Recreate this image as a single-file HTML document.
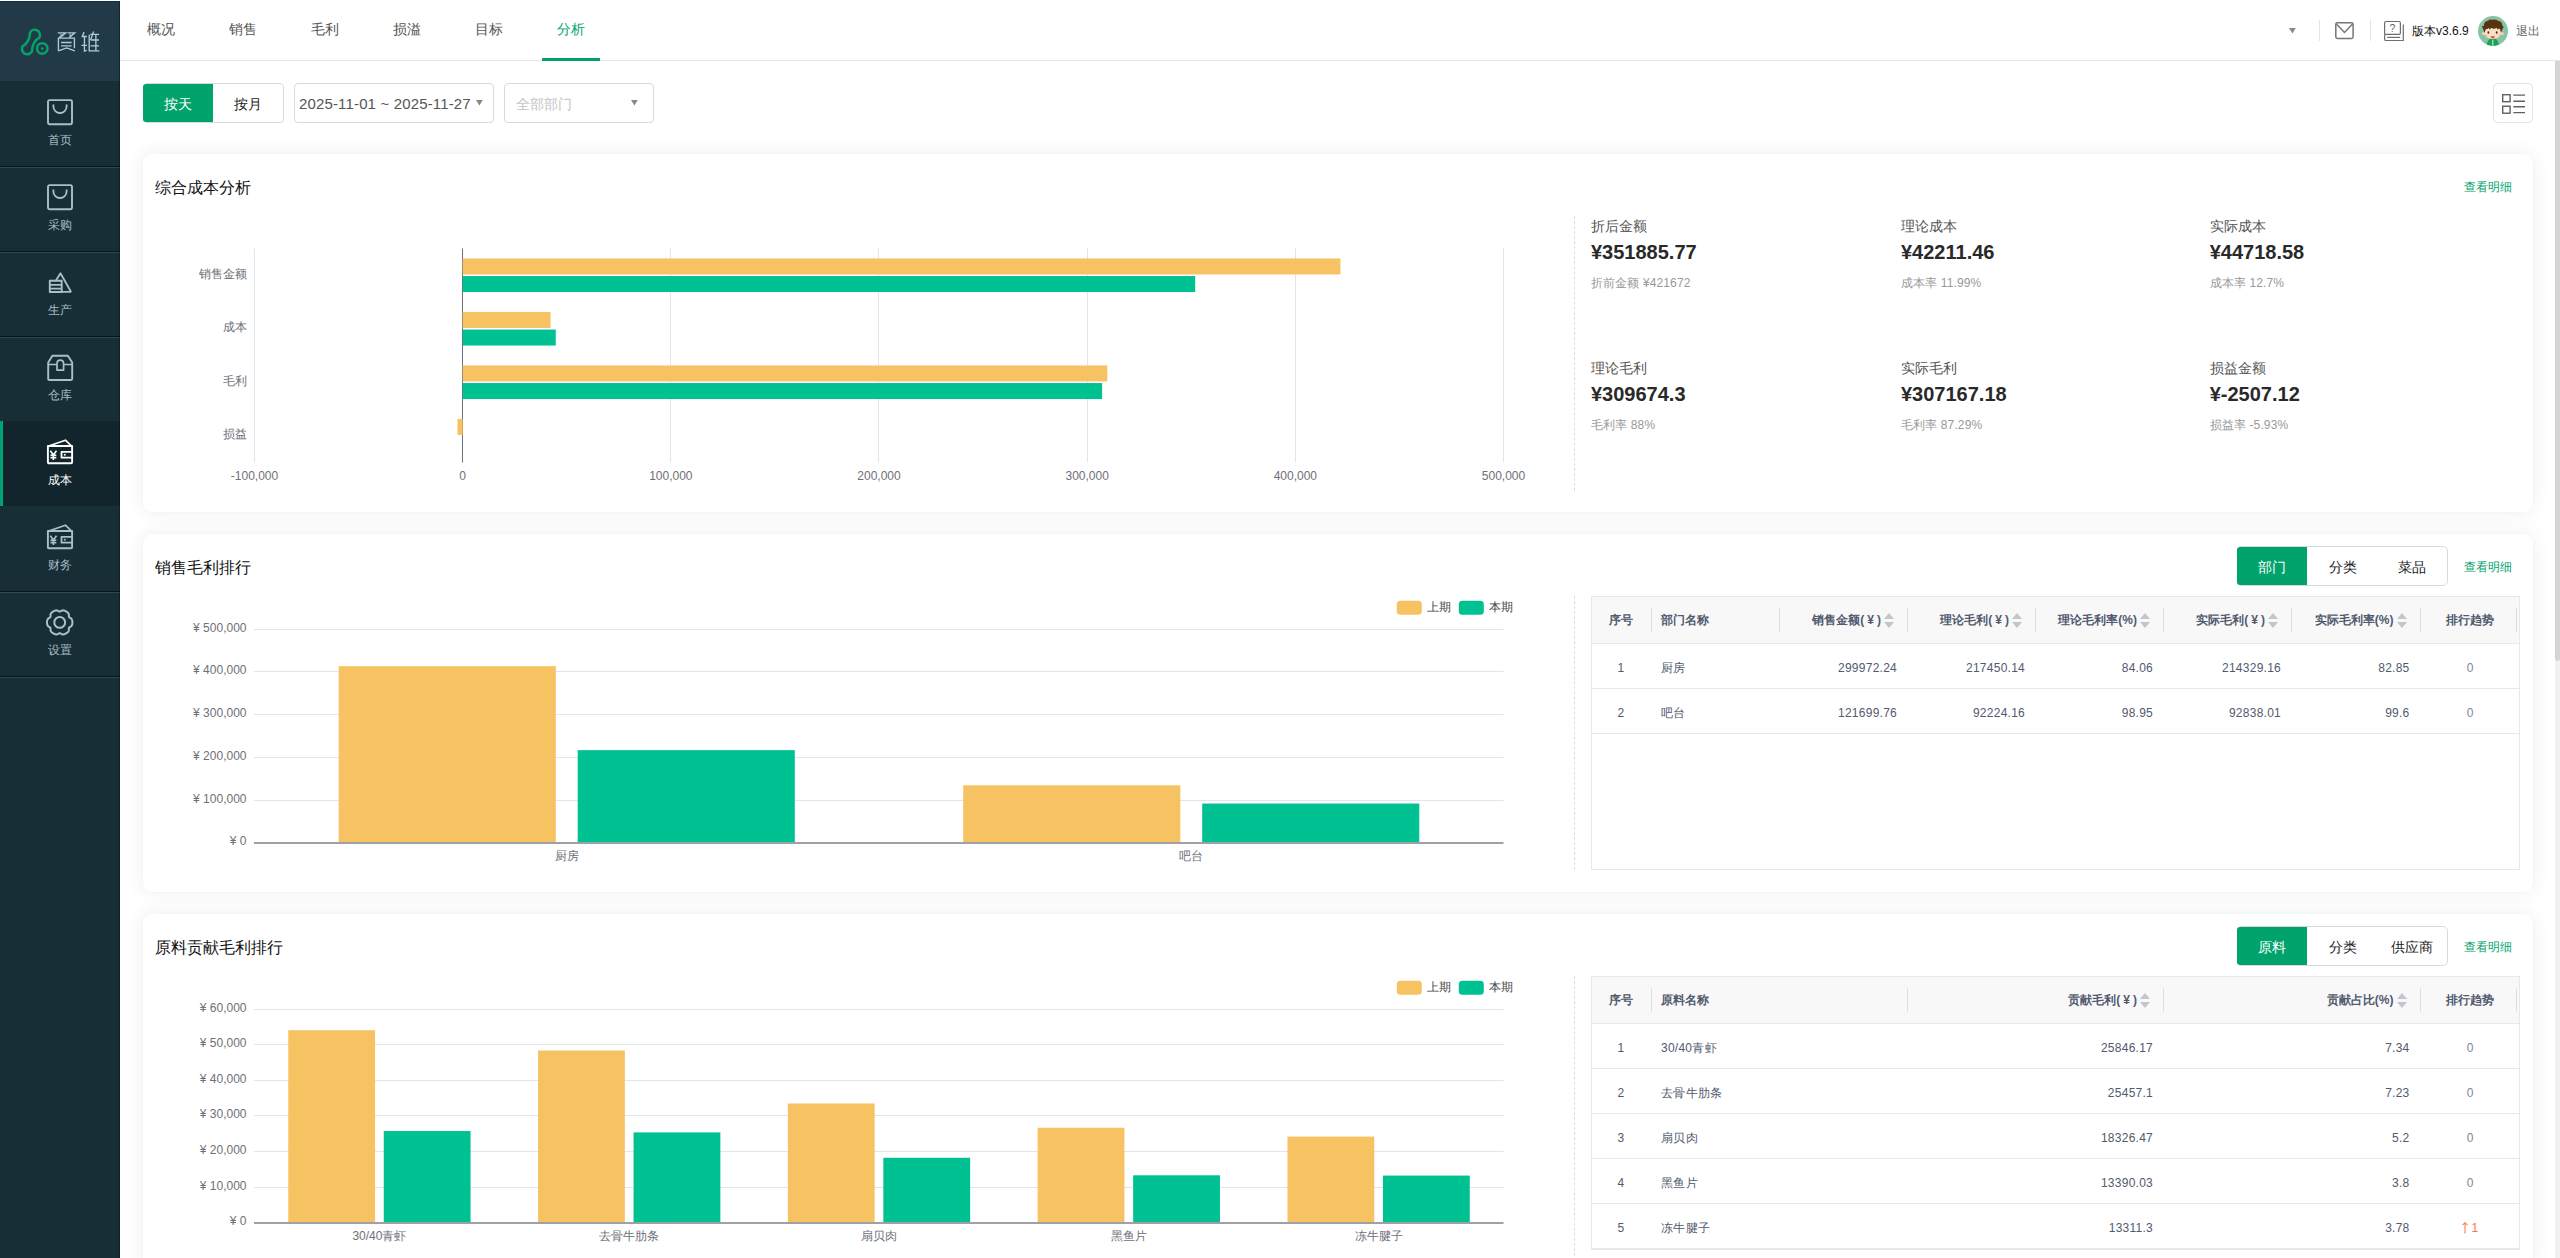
<!DOCTYPE html>
<html lang="zh"><head><meta charset="utf-8"><title>成本分析</title>
<style>

*{box-sizing:border-box;margin:0;padding:0}
html,body{width:2560px;height:1258px;overflow:hidden;background:#fff}
body{font-family:"Liberation Sans",sans-serif;font-size:12px;color:#333;position:relative}
.abs{position:absolute}
.t{position:absolute;white-space:nowrap;line-height:1}
svg{position:absolute;overflow:visible}
/* sidebar */
#side{position:absolute;left:0;top:1px;width:120px;height:1257px;background:#182e37}
#side:after{content:"";position:absolute;right:0;top:0;width:1px;height:100%;background:rgba(0,14,24,.42);z-index:5}
#logo{position:absolute;left:0;top:0;width:120px;height:80px;background:#223a47;border-top:1px solid #10303c}
.mi{position:absolute;left:0;width:120px;height:85px}
.sep{position:absolute;left:0;width:120px;height:2px;background:#2e4a56;border-top:1px solid #08131a}
.mi .lb{position:absolute;left:0;width:120px;text-align:center;top:52px;font-size:12px;line-height:14px;color:#a5bec6}
.mi.on{background:#12252d}
.mi.on .lb{color:#fff}
.mi.on:before{content:"";position:absolute;left:0;top:0;width:3px;height:85px;background:linear-gradient(90deg,#00a070 55%,#00b178)}
/* top */
#top{position:absolute;left:120px;top:0;width:2440px;height:61px;background:#fff;border-bottom:1px solid #e6e6e6}
.tab{position:absolute;top:0;height:60px;width:82px;text-align:center;font-size:14px;line-height:58px;color:#555}
.tab.on{color:#00a36b}
.tab.on:after{content:"";position:absolute;left:12px;right:12px;bottom:-1px;height:3px;background:#00a16a;z-index:2}
/* cards */
.card{position:absolute;left:142.5px;width:2390px;height:358px;background:#fff;border-radius:9px;box-shadow:0 0 20px rgba(0,0,0,.07),0 0 2px rgba(0,0,0,.035)}
.ct{position:absolute;left:12px;top:25px;font-size:16px;line-height:18px;color:#111;white-space:nowrap}
.lnk{position:absolute;font-size:12px;line-height:14px;color:#00a36b;white-space:nowrap}
.bg{position:absolute;height:40px;border:1px solid #d9d9d9;border-radius:4px;background:#fff}
.bg span.on{}
.bg span{position:absolute;top:0;height:38px;line-height:40px;text-align:center;font-size:14px;color:#222}
.bg span.on{background:#00a36b;color:#fff;left:-1px !important;border-radius:3px 0 0 3px}
.vd{position:absolute;width:0;border-left:1px dashed #dcdcdc}
/* stats */
.st{position:absolute}
.st .a{position:absolute;left:0;top:0;font-size:14px;line-height:16px;color:#555;white-space:nowrap}
.st .b{position:absolute;left:0;top:22px;font-size:20px;line-height:24px;font-weight:bold;color:#292929;white-space:nowrap}
.st .c{position:absolute;left:0;top:58px;font-size:12px;line-height:14px;color:#999;white-space:nowrap;letter-spacing:.12px}
/* tables */
.tb{position:absolute;border:1px solid #e6e8eb;background:#fff;overflow:hidden}
.tb .hd{position:absolute;left:0;top:0;right:0;height:47px;background:#f8f8f9;border-bottom:1px solid #e6e8eb}
.tb .row{position:absolute;left:0;right:0;height:45px;border-bottom:1px solid #e6e8eb}
.tb .c{position:absolute;top:0;height:100%;font-size:12px;white-space:nowrap;color:#515a6e}
.tb .hd .c{font-weight:bold;line-height:46.5px;color:#515a6e}
.tb .row .c{line-height:48.5px;letter-spacing:.25px}
.tb .hs{position:absolute;top:10.5px;width:1px;height:24px;background:#dcdee2}
.so{display:inline-block;position:relative;width:10px;height:15px;vertical-align:middle;margin-left:3px;top:-0.5px}
.so:before{content:"";position:absolute;left:0;top:0;border:5px solid transparent;border-top:0;border-bottom:6.5px solid #c3c6cc}
.so:after{content:"";position:absolute;left:0;bottom:0;border:5px solid transparent;border-bottom:0;border-top:6.5px solid #c3c6cc}
.yy{padding:0 3px 0 3px}

</style></head><body>
<div id="side"><div id="logo">
<svg style="left:20px;top:24.600px" width="32" height="32" viewBox="0 0 32 32" fill="none" stroke="#04a36b" stroke-width="2.5"><path d="M10.02 5.55A5.3 5.3 0 1 1 19.36 10.58Q12.27 14.51 11.97 24.29A5.3 5.3 0 1 1 2.64 19.27Q9.73 15.33 10.02 5.55Z"/><circle cx="22.25" cy="21.43" r="5.200"/><circle cx="22.25" cy="21.43" r="1.300" fill="#04a36b" stroke="none"/></svg><svg style="left:56px;top:27.800px" width="46" height="24" viewBox="0 0 46 24" fill="none" stroke="#aecbd6" stroke-width="1.35"><path d="M1.72 2.83L9.81 2.83L3.13 7.58M4.36 4.59L7.35 6.00M11.74 2.83L18.77 2.83L13.32 7.58M13.32 4.59L16.14 6.00M2.42 20.94L2.42 8.11L18.42 8.11L18.42 18.13M5.06 12.50L15.61 12.50M5.06 15.84L15.61 15.84M2.42 20.94L10.69 17.95L18.77 20.94M28.09 2.13L25.98 7.23M27.04 6.53L30.91 6.53M25.46 15.32L30.91 15.32M28.44 6.53L28.44 21.12L30.73 20.41M37.59 1.60L34.60 10.04M34.25 4.42L43.04 4.42M34.60 10.04L43.04 10.04M33.19 4.77L33.19 20.94L43.39 20.94M39.87 4.77L39.87 20.24M34.60 15.84L43.04 15.84"/></svg>
</div>
<div class="mi" style="top:80px"><svg style="left:47.2px;top:17.8px" width="27" height="28" viewBox="0 0 27 28" fill="none" stroke="#a8c0c9" stroke-width="1.9" stroke-linejoin="round"><rect x="1" y="1.1" width="24" height="24.1" rx="1.6"/><path d="M6.400 5.600v1.800a6.600 6.600 0 0 0 13.200 0v-1.800" stroke-width="1.8"/></svg><div class="lb">首页</div></div>
<div class="mi" style="top:165px"><svg style="left:47.2px;top:17.8px" width="27" height="28" viewBox="0 0 27 28" fill="none" stroke="#a8c0c9" stroke-width="1.9" stroke-linejoin="round"><rect x="1" y="1.1" width="24" height="24.1" rx="1.6"/><path d="M6.400 5.600v1.800a6.600 6.600 0 0 0 13.200 0v-1.800" stroke-width="1.8"/></svg><div class="lb">采购</div></div>
<div class="mi" style="top:250px"><svg style="left:47px;top:18px" width="27" height="28" viewBox="0 0 27 28" fill="none" stroke="#a8c0c9" stroke-width="1.9" stroke-linejoin="round"><path d="M2.800 11.700H14.700V22.950H2.800Z"/><path d="M3 15.800H14.500M3 19.600H14.500" stroke-width="1.7"/><path d="M8.900 11.500L13.500 4.300L23.700 22.200Q24 22.950 23 22.950H14.700" stroke-width="1.8"/></svg><div class="lb">生产</div></div>
<div class="mi" style="top:335px"><svg style="left:47px;top:18px" width="27" height="28" viewBox="0 0 27 28" fill="none" stroke="#a8c0c9" stroke-width="1.9" stroke-linejoin="round"><path d="M5.400 1.800H20.900L25.200 8.400V24.800Q25.200 26 24 26H2.400Q1.200 26 1.200 24.800V8.400Z"/><path d="M1.200 10.500H9.800M16.800 10.500H25.200" stroke-width="1.7"/><path d="M10 16.100V9.800Q10 6.200 13.300 6.200Q16.600 6.200 16.600 9.800V16.100Z" stroke-width="1.7"/></svg><div class="lb">仓库</div></div>
<div class="mi on" style="top:420px"><svg style="left:47px;top:18px" width="27" height="28" viewBox="0 0 27 28" fill="none" stroke="#ffffff" stroke-width="1.9" stroke-linejoin="round"><path d="M0.900 7H25.100V23.200Q25.100 24.300 24 24.300H2Q0.900 24.300 0.900 23.200Z"/><path d="M2.400 6.800L18.400 1.200L24.300 6.800" stroke-width="1.7"/><path d="M25.100 12.900H14.500V18.700H25.100" stroke-width="1.8"/><circle cx="17.800" cy="15.800" r="1" fill="#ffffff" stroke="none"/><path d="M3.300 11.800L6.400 16L9.500 11.800M6.400 16V21M3.500 16.400H9.300M3.500 18.700H9.300" stroke-width="1.6"/></svg><div class="lb">成本</div></div>
<div class="mi" style="top:505px"><svg style="left:47px;top:18px" width="27" height="28" viewBox="0 0 27 28" fill="none" stroke="#a8c0c9" stroke-width="1.9" stroke-linejoin="round"><path d="M0.900 7H25.100V23.200Q25.100 24.300 24 24.300H2Q0.900 24.300 0.900 23.200Z"/><path d="M2.400 6.800L18.400 1.200L24.300 6.800" stroke-width="1.7"/><path d="M25.100 12.900H14.500V18.700H25.100" stroke-width="1.8"/><circle cx="17.800" cy="15.800" r="1" fill="#a8c0c9" stroke="none"/><path d="M3.300 11.800L6.400 16L9.500 11.800M6.400 16V21M3.500 16.400H9.300M3.500 18.700H9.300" stroke-width="1.6"/></svg><div class="lb">财务</div></div>
<div class="mi" style="top:590px"><svg style="left:46.3px;top:17.6px" width="28" height="28" viewBox="0 0 28 28" fill="none" stroke="#a8c0c9" stroke-width="2.0" stroke-linejoin="round"><path d="M26.40 13.40L26.40 13.51L26.40 13.62L26.39 13.73L26.39 13.84L26.39 13.95L26.38 14.06L26.37 14.18L26.36 14.29L26.36 14.40L26.35 14.51L26.33 14.62L26.32 14.73L26.31 14.84L26.29 14.95L26.27 15.06L26.25 15.16L26.23 15.27L26.21 15.38L26.18 15.49L26.16 15.60L26.13 15.70L26.10 15.81L26.06 15.91L26.02 16.02L25.98 16.12L25.94 16.23L25.89 16.33L25.84 16.43L25.79 16.53L25.73 16.62L25.67 16.72L25.60 16.81L25.53 16.90L25.45 16.99L25.37 17.08L25.29 17.17L25.20 17.25L25.11 17.33L25.01 17.41L24.91 17.48L24.81 17.55L24.71 17.62L24.60 17.69L24.49 17.76L24.38 17.82L24.27 17.89L24.16 17.95L24.05 18.01L23.94 18.07L23.84 18.13L23.74 18.19L23.64 18.25L23.54 18.31L23.46 18.37L23.37 18.44L23.30 18.50L23.22 18.57L23.16 18.64L23.10 18.72L23.05 18.80L23.01 18.88L22.97 18.97L22.94 19.06L22.92 19.16L22.90 19.26L22.88 19.36L22.87 19.47L22.87 19.58L22.86 19.70L22.86 19.82L22.86 19.94L22.87 20.06L22.87 20.18L22.87 20.31L22.87 20.44L22.87 20.56L22.87 20.69L22.86 20.82L22.85 20.95L22.84 21.07L22.83 21.19L22.81 21.32L22.78 21.44L22.76 21.55L22.72 21.67L22.69 21.78L22.65 21.89L22.60 22.00L22.56 22.10L22.51 22.21L22.45 22.30L22.39 22.40L22.33 22.50L22.27 22.59L22.20 22.68L22.13 22.76L22.06 22.85L21.98 22.93L21.91 23.01L21.83 23.09L21.75 23.17L21.67 23.24L21.59 23.32L21.50 23.39L21.42 23.46L21.33 23.53L21.25 23.60L21.16 23.67L21.07 23.73L20.98 23.80L20.89 23.86L20.80 23.93L20.71 23.99L20.62 24.05L20.52 24.11L20.43 24.17L20.34 24.23L20.24 24.29L20.15 24.34L20.05 24.40L19.95 24.45L19.86 24.51L19.76 24.56L19.66 24.61L19.56 24.66L19.46 24.71L19.37 24.76L19.27 24.81L19.17 24.86L19.06 24.90L18.96 24.95L18.86 24.99L18.76 25.04L18.66 25.08L18.55 25.12L18.45 25.15L18.34 25.19L18.24 25.22L18.13 25.26L18.03 25.29L17.92 25.31L17.81 25.34L17.70 25.36L17.59 25.38L17.48 25.40L17.37 25.41L17.26 25.42L17.15 25.43L17.04 25.43L16.92 25.43L16.81 25.42L16.69 25.41L16.58 25.40L16.46 25.37L16.35 25.35L16.23 25.32L16.12 25.28L16.00 25.24L15.89 25.20L15.77 25.15L15.66 25.10L15.54 25.04L15.43 24.98L15.32 24.92L15.21 24.86L15.10 24.80L14.99 24.73L14.88 24.67L14.78 24.60L14.67 24.54L14.57 24.48L14.47 24.43L14.37 24.38L14.27 24.33L14.18 24.29L14.08 24.26L13.98 24.23L13.89 24.22L13.79 24.20L13.70 24.20L13.61 24.20L13.51 24.22L13.42 24.23L13.32 24.26L13.22 24.29L13.13 24.33L13.03 24.38L12.93 24.43L12.83 24.48L12.73 24.54L12.62 24.60L12.52 24.67L12.41 24.73L12.30 24.80L12.19 24.86L12.08 24.92L11.97 24.98L11.86 25.04L11.74 25.10L11.63 25.15L11.51 25.20L11.40 25.24L11.28 25.28L11.17 25.32L11.05 25.35L10.94 25.37L10.82 25.40L10.71 25.41L10.59 25.42L10.48 25.43L10.36 25.43L10.25 25.43L10.14 25.42L10.03 25.41L9.92 25.40L9.81 25.38L9.70 25.36L9.59 25.34L9.48 25.31L9.37 25.29L9.27 25.26L9.16 25.22L9.06 25.19L8.95 25.15L8.85 25.12L8.74 25.08L8.64 25.04L8.54 24.99L8.44 24.95L8.34 24.90L8.23 24.86L8.13 24.81L8.03 24.76L7.94 24.71L7.84 24.66L7.74 24.61L7.64 24.56L7.54 24.51L7.45 24.45L7.35 24.40L7.25 24.34L7.16 24.29L7.06 24.23L6.97 24.17L6.88 24.11L6.78 24.05L6.69 23.99L6.60 23.93L6.51 23.86L6.42 23.80L6.33 23.73L6.24 23.67L6.15 23.60L6.07 23.53L5.98 23.46L5.90 23.39L5.81 23.32L5.73 23.24L5.65 23.17L5.57 23.09L5.49 23.01L5.42 22.93L5.34 22.85L5.27 22.76L5.20 22.68L5.13 22.59L5.07 22.50L5.01 22.40L4.95 22.30L4.89 22.21L4.84 22.10L4.80 22.00L4.75 21.89L4.71 21.78L4.68 21.67L4.64 21.55L4.62 21.44L4.59 21.32L4.57 21.19L4.56 21.07L4.55 20.95L4.54 20.82L4.53 20.69L4.53 20.56L4.53 20.44L4.53 20.31L4.53 20.18L4.53 20.06L4.54 19.94L4.54 19.82L4.54 19.70L4.53 19.58L4.53 19.47L4.52 19.36L4.50 19.26L4.48 19.16L4.46 19.06L4.43 18.97L4.39 18.88L4.35 18.80L4.30 18.72L4.24 18.64L4.18 18.57L4.10 18.50L4.03 18.44L3.94 18.37L3.86 18.31L3.76 18.25L3.66 18.19L3.56 18.13L3.46 18.07L3.35 18.01L3.24 17.95L3.13 17.89L3.02 17.82L2.91 17.76L2.80 17.69L2.69 17.62L2.59 17.55L2.49 17.48L2.39 17.41L2.29 17.33L2.20 17.25L2.11 17.17L2.03 17.08L1.95 16.99L1.87 16.90L1.80 16.81L1.73 16.72L1.67 16.62L1.61 16.53L1.56 16.43L1.51 16.33L1.46 16.23L1.42 16.12L1.38 16.02L1.34 15.91L1.30 15.81L1.27 15.70L1.24 15.60L1.22 15.49L1.19 15.38L1.17 15.27L1.15 15.16L1.13 15.06L1.11 14.95L1.09 14.84L1.08 14.73L1.07 14.62L1.05 14.51L1.04 14.40L1.04 14.29L1.03 14.18L1.02 14.06L1.01 13.95L1.01 13.84L1.01 13.73L1.00 13.62L1.00 13.51L1.00 13.40L1.00 13.29L1.00 13.18L1.01 13.07L1.01 12.96L1.01 12.85L1.02 12.74L1.03 12.62L1.04 12.51L1.04 12.40L1.05 12.29L1.07 12.18L1.08 12.07L1.09 11.96L1.11 11.85L1.13 11.74L1.15 11.64L1.17 11.53L1.19 11.42L1.22 11.31L1.24 11.20L1.27 11.10L1.30 10.99L1.34 10.89L1.38 10.78L1.42 10.68L1.46 10.57L1.51 10.47L1.56 10.37L1.61 10.27L1.67 10.18L1.73 10.08L1.80 9.99L1.87 9.90L1.95 9.81L2.03 9.72L2.11 9.63L2.20 9.55L2.29 9.47L2.39 9.39L2.49 9.32L2.59 9.25L2.69 9.18L2.80 9.11L2.91 9.04L3.02 8.98L3.13 8.91L3.24 8.85L3.35 8.79L3.46 8.73L3.56 8.67L3.66 8.61L3.76 8.55L3.86 8.49L3.94 8.43L4.03 8.36L4.10 8.30L4.18 8.23L4.24 8.16L4.30 8.08L4.35 8.00L4.39 7.92L4.43 7.83L4.46 7.74L4.48 7.64L4.50 7.54L4.52 7.44L4.53 7.33L4.53 7.22L4.54 7.10L4.54 6.98L4.54 6.86L4.53 6.74L4.53 6.62L4.53 6.49L4.53 6.36L4.53 6.24L4.53 6.11L4.54 5.98L4.55 5.85L4.56 5.73L4.57 5.61L4.59 5.48L4.62 5.36L4.64 5.25L4.68 5.13L4.71 5.02L4.75 4.91L4.80 4.80L4.84 4.70L4.89 4.59L4.95 4.50L5.01 4.40L5.07 4.30L5.13 4.21L5.20 4.12L5.27 4.04L5.34 3.95L5.42 3.87L5.49 3.79L5.57 3.71L5.65 3.63L5.73 3.56L5.81 3.48L5.90 3.41L5.98 3.34L6.07 3.27L6.15 3.20L6.24 3.13L6.33 3.07L6.42 3.00L6.51 2.94L6.60 2.87L6.69 2.81L6.78 2.75L6.88 2.69L6.97 2.63L7.06 2.57L7.16 2.51L7.25 2.46L7.35 2.40L7.45 2.35L7.54 2.29L7.64 2.24L7.74 2.19L7.84 2.14L7.94 2.09L8.03 2.04L8.13 1.99L8.23 1.94L8.34 1.90L8.44 1.85L8.54 1.81L8.64 1.76L8.74 1.72L8.85 1.68L8.95 1.65L9.06 1.61L9.16 1.58L9.27 1.54L9.37 1.51L9.48 1.49L9.59 1.46L9.70 1.44L9.81 1.42L9.92 1.40L10.03 1.39L10.14 1.38L10.25 1.37L10.36 1.37L10.48 1.37L10.59 1.38L10.71 1.39L10.82 1.40L10.94 1.43L11.05 1.45L11.17 1.48L11.28 1.52L11.40 1.56L11.51 1.60L11.63 1.65L11.74 1.70L11.86 1.76L11.97 1.82L12.08 1.88L12.19 1.94L12.30 2.00L12.41 2.07L12.52 2.13L12.62 2.20L12.73 2.26L12.83 2.32L12.93 2.37L13.03 2.42L13.13 2.47L13.22 2.51L13.32 2.54L13.42 2.57L13.51 2.58L13.61 2.60L13.70 2.60L13.79 2.60L13.89 2.58L13.98 2.57L14.08 2.54L14.18 2.51L14.27 2.47L14.37 2.42L14.47 2.37L14.57 2.32L14.67 2.26L14.78 2.20L14.88 2.13L14.99 2.07L15.10 2.00L15.21 1.94L15.32 1.88L15.43 1.82L15.54 1.76L15.66 1.70L15.77 1.65L15.89 1.60L16.00 1.56L16.12 1.52L16.23 1.48L16.35 1.45L16.46 1.43L16.58 1.40L16.69 1.39L16.81 1.38L16.92 1.37L17.04 1.37L17.15 1.37L17.26 1.38L17.37 1.39L17.48 1.40L17.59 1.42L17.70 1.44L17.81 1.46L17.92 1.49L18.03 1.51L18.13 1.54L18.24 1.58L18.34 1.61L18.45 1.65L18.55 1.68L18.66 1.72L18.76 1.76L18.86 1.81L18.96 1.85L19.06 1.90L19.17 1.94L19.27 1.99L19.37 2.04L19.46 2.09L19.56 2.14L19.66 2.19L19.76 2.24L19.86 2.29L19.95 2.35L20.05 2.40L20.15 2.46L20.24 2.51L20.34 2.57L20.43 2.63L20.52 2.69L20.62 2.75L20.71 2.81L20.80 2.87L20.89 2.94L20.98 3.00L21.07 3.07L21.16 3.13L21.25 3.20L21.33 3.27L21.42 3.34L21.50 3.41L21.59 3.48L21.67 3.56L21.75 3.63L21.83 3.71L21.91 3.79L21.98 3.87L22.06 3.95L22.13 4.04L22.20 4.12L22.27 4.21L22.33 4.30L22.39 4.40L22.45 4.50L22.51 4.59L22.56 4.70L22.60 4.80L22.65 4.91L22.69 5.02L22.72 5.13L22.76 5.25L22.78 5.36L22.81 5.48L22.83 5.61L22.84 5.73L22.85 5.85L22.86 5.98L22.87 6.11L22.87 6.24L22.87 6.36L22.87 6.49L22.87 6.62L22.87 6.74L22.86 6.86L22.86 6.98L22.86 7.10L22.87 7.22L22.87 7.33L22.88 7.44L22.90 7.54L22.92 7.64L22.94 7.74L22.97 7.83L23.01 7.92L23.05 8.00L23.10 8.08L23.16 8.16L23.22 8.23L23.30 8.30L23.37 8.36L23.46 8.43L23.54 8.49L23.64 8.55L23.74 8.61L23.84 8.67L23.94 8.73L24.05 8.79L24.16 8.85L24.27 8.91L24.38 8.98L24.49 9.04L24.60 9.11L24.71 9.18L24.81 9.25L24.91 9.32L25.01 9.39L25.11 9.47L25.20 9.55L25.29 9.63L25.37 9.72L25.45 9.81L25.53 9.90L25.60 9.99L25.67 10.08L25.73 10.18L25.79 10.27L25.84 10.37L25.89 10.47L25.94 10.57L25.98 10.68L26.02 10.78L26.06 10.89L26.10 10.99L26.13 11.10L26.16 11.20L26.18 11.31L26.21 11.42L26.23 11.53L26.25 11.64L26.27 11.74L26.29 11.85L26.31 11.96L26.32 12.07L26.33 12.18L26.35 12.29L26.36 12.40L26.36 12.51L26.37 12.62L26.38 12.74L26.39 12.85L26.39 12.96L26.39 13.07L26.40 13.18L26.40 13.29Z"/><circle cx="13.7" cy="13.4" r="5.400"/></svg><div class="lb">设置</div></div>
<div class="sep" style="top:165px"></div>
<div class="sep" style="top:250px"></div>
<div class="sep" style="top:335px"></div>
<div class="sep" style="top:590px"></div>
<div class="sep" style="top:675px"></div>
</div>
<div id="top">
<div class="tab" style="left:0px">概况</div>
<div class="tab" style="left:82px">销售</div>
<div class="tab" style="left:164px">毛利</div>
<div class="tab" style="left:246px">损溢</div>
<div class="tab" style="left:328px">目标</div>
<div class="tab on" style="left:410px">分析</div>
<svg style="left:2169px;top:28px" width="8" height="6" viewBox="0 0 8 6"><path d="M0 0H6.800L3.400 5.500Z" fill="#8a8a8a"/></svg>
<div class="abs" style="left:2199px;top:20px;width:1px;height:21px;background:#e4e4e4"></div>
<svg style="left:2215.1px;top:21.700px" width="20" height="18" viewBox="0 0 20 18" fill="none" stroke="#767676" stroke-width="1.5"><rect x="0.8" y="0.8" width="17.300" height="15.600" rx="1.600"/><path d="M1.200 1.800L9.450 10.400L17.700 1.800" stroke-width="1.4"/></svg>
<div class="abs" style="left:2250px;top:20px;width:1px;height:21px;background:#e4e4e4"></div>
<svg style="left:2264px;top:21px" width="21" height="21" viewBox="0 0 21 21" fill="none" stroke="#6e6e6e" stroke-width="1.2"><path d="M0.600 13.300V1.900Q0.600 0.500 2 0.500H15Q16.400 0.500 16.400 1.900V12Q16.400 13.300 15 13.300H2Q0.600 13.300 0.600 14.700V18.200Q0.600 19.500 2 19.500H19.300V3.400"/><path d="M3.200 16.400H16.200"/><text x="8.300" y="10.600" font-size="10.500" font-family="Liberation Sans,sans-serif" fill="#666" stroke="none" text-anchor="middle">?</text></svg>
<div class="t" style="left:2292px;top:24px;font-size:12px;line-height:14px;color:#111">版本v3.6.9</div>
<svg style="left:2358px;top:16px" width="30" height="30" viewBox="0 0 30 30"><defs><clipPath id="av"><circle cx="15" cy="15" r="15"/></clipPath></defs><g clip-path="url(#av)"><rect width="30" height="30" fill="#87c3a4"/><path d="M8.600 30Q9.200 24 12.800 22.600H17Q20.400 24 21 30Z" fill="#17a254"/><path d="M14.400 23.500V30H15.300V23.500Z" fill="#eef8f1"/><circle cx="5.600" cy="17.600" r="1.700" fill="#f3d3b5"/><circle cx="24" cy="17.600" r="1.700" fill="#f3d3b5"/><path d="M6.300 14Q6 22.600 14.800 23Q23.600 22.600 23.300 14Q20 9 14.800 9Q9.500 9 6.300 14Z" fill="#f9dfc4"/><path d="M12.400 20.200H17.200L14.800 22.800Z" fill="#e8333a"/><path d="M6.600 16.800Q5.500 14.500 5 12.500L3.800 10.500L5.800 9.800Q6 5.500 10 4.800Q11.500 3 14.500 3.800Q18 2.800 20.500 5Q24.500 5.500 24.300 9.800L25.800 11L24.500 12.800Q24 15 23 16.800Q22.600 13.500 21 12.200L19.500 13.800L18.800 11.800Q16 13.500 13 11.800L12 13.800L10.800 12Q9.500 13.200 8.500 12.800Q7 14 6.600 16.800Z" fill="#5a3310"/><ellipse cx="10.400" cy="16.500" rx="0.900" ry="1.350" fill="#4a2c12"/><ellipse cx="18.700" cy="16.500" rx="0.900" ry="1.350" fill="#4a2c12"/><ellipse cx="8.800" cy="19.300" rx="1.300" ry="0.800" fill="#f7c4ac"/><ellipse cx="20.600" cy="19.300" rx="1.300" ry="0.800" fill="#f7c4ac"/></g></svg>
<div class="t" style="left:2396px;top:24px;font-size:12px;line-height:14px;color:#666">退出</div>
</div>
<div class="bg" style="left:142.5px;top:83px;width:141.5px"><span class="on" style="width:70.5px">按天</span><span style="left:70px;width:69px">按月</span></div>
<div class="bg" style="left:294px;top:83px;width:200px"><span style="left:4px;white-space:nowrap;font-size:15px;color:#555;letter-spacing:.15px">2025-11-01 ~ 2025-11-27</span><svg style="left:181px;top:15.500px" width="8" height="6" viewBox="0 0 8 6"><path d="M0 0H6.800L3.400 5.500Z" fill="#888"/></svg></div>
<div class="bg" style="left:504px;top:83px;width:150px"><span style="left:11px;width:57px;font-size:14px;color:#c4c4c4;text-align:left">全部部门</span><svg style="left:126px;top:15.500px" width="8" height="6" viewBox="0 0 8 6"><path d="M0 0H6.800L3.400 5.500Z" fill="#888"/></svg></div>
<div class="bg" style="left:2493px;top:83px;width:40px;border-color:#e2e2e2;border-radius:5px"><svg style="left:7.600px;top:9.800px" width="24" height="22" viewBox="0 0 24 22" fill="none" stroke="#606060" stroke-width="1.4"><rect x="0.7" y="0.7" width="7.400" height="7"/><rect x="0.7" y="12.200" width="7.400" height="7"/><path d="M11.300 1.100H23M11.300 7.200H23M11.300 12.700H23M11.300 18.600H23"/></svg></div>
<div class="card" style="top:153.5px"><div class="ct">综合成本分析</div><div class="lnk" style="left:2321px;top:26px">查看明细</div><div class="vd" style="left:1431px;top:62px;height:275px"></div><div class="st" style="left:1448.5px;top:64.5px"><div class="a">折后金额</div><div class="b">¥351885.77</div><div class="c">折前金额 ¥421672</div></div><div class="st" style="left:1758.5px;top:64.5px"><div class="a">理论成本</div><div class="b">¥42211.46</div><div class="c">成本率 11.99%</div></div><div class="st" style="left:2067.2px;top:64.5px"><div class="a">实际成本</div><div class="b">¥44718.58</div><div class="c">成本率 12.7%</div></div><div class="st" style="left:1448.5px;top:206.5px"><div class="a">理论毛利</div><div class="b">¥309674.3</div><div class="c">毛利率 88%</div></div><div class="st" style="left:1758.5px;top:206.5px"><div class="a">实际毛利</div><div class="b">¥307167.18</div><div class="c">毛利率 87.29%</div></div><div class="st" style="left:2067.2px;top:206.5px"><div class="a">损益金额</div><div class="b">¥-2507.12</div><div class="c">损益率 -5.93%</div></div></div><svg style="left:0;top:0" width="2560" height="1258" viewBox="0 0 2560 1258">
<path d="M254.5 248.5L254.5 462.5" stroke="#e2e5ee" stroke-width="1" fill="none"/>
<text x="254.5" y="480.3" text-anchor="middle" font-size="12" fill="#6e7079" font-family="Liberation Sans,sans-serif" >-100,000</text>
<text x="462.67" y="480.3" text-anchor="middle" font-size="12" fill="#6e7079" font-family="Liberation Sans,sans-serif" >0</text>
<path d="M670.5 248.5L670.5 462.5" stroke="#e2e5ee" stroke-width="1" fill="none"/>
<text x="670.83" y="480.3" text-anchor="middle" font-size="12" fill="#6e7079" font-family="Liberation Sans,sans-serif" >100,000</text>
<path d="M878.5 248.5L878.5 462.5" stroke="#e2e5ee" stroke-width="1" fill="none"/>
<text x="879" y="480.3" text-anchor="middle" font-size="12" fill="#6e7079" font-family="Liberation Sans,sans-serif" >200,000</text>
<path d="M1087.5 248.5L1087.5 462.5" stroke="#e2e5ee" stroke-width="1" fill="none"/>
<text x="1087.17" y="480.3" text-anchor="middle" font-size="12" fill="#6e7079" font-family="Liberation Sans,sans-serif" >300,000</text>
<path d="M1295.5 248.5L1295.5 462.5" stroke="#e2e5ee" stroke-width="1" fill="none"/>
<text x="1295.33" y="480.3" text-anchor="middle" font-size="12" fill="#6e7079" font-family="Liberation Sans,sans-serif" >400,000</text>
<path d="M1503.5 248.5L1503.5 462.5" stroke="#e2e5ee" stroke-width="1" fill="none"/>
<text x="1503.5" y="480.3" text-anchor="middle" font-size="12" fill="#6e7079" font-family="Liberation Sans,sans-serif" >500,000</text>
<path d="M462.5 248.5L462.5 462.5" stroke="#6e7079" stroke-width="1" fill="none"/>
<text x="246.5" y="277.75" text-anchor="end" font-size="12" fill="#6e7079" font-family="Liberation Sans,sans-serif" >销售金额</text>
<rect x="462.67" y="258.45" width="877.78" height="16" fill="#f7c362"/>
<rect x="462.67" y="276.05" width="732.51" height="16" fill="#00c192"/>
<text x="246.5" y="331.25" text-anchor="end" font-size="12" fill="#6e7079" font-family="Liberation Sans,sans-serif" >成本</text>
<rect x="462.67" y="311.95" width="87.87" height="16" fill="#f7c362"/>
<rect x="462.67" y="329.55" width="93.09" height="16" fill="#00c192"/>
<text x="246.5" y="384.75" text-anchor="end" font-size="12" fill="#6e7079" font-family="Liberation Sans,sans-serif" >毛利</text>
<rect x="462.67" y="365.45" width="644.64" height="16" fill="#f7c362"/>
<rect x="462.67" y="383.05" width="639.42" height="16" fill="#00c192"/>
<text x="246.5" y="438.25" text-anchor="end" font-size="12" fill="#6e7079" font-family="Liberation Sans,sans-serif" >损益</text>
<rect x="457.45" y="418.95" width="5.22" height="16" fill="#f7c362"/>
</svg>
<div class="card" style="top:533.5px"><div class="ct">销售毛利排行</div><div class="bg" style="left:2094.5px;top:12.5px;width:211px;border-radius:5px"><span class="on" style="left:0px;width:70.0px">部门</span><span style="left:69.5px;width:70px">分类</span><span style="left:139.5px;width:69.5px">菜品</span></div><div class="lnk" style="left:2321px;top:26px">查看明细</div><div class="vd" style="left:1431px;top:62.5px;height:274px"></div><div class="tb" style="left:1448.5px;top:62.5px;width:929px;height:274px"><div class="hd"><div class="c" style="left:-1px;width:60px;text-align:center">序号</div><div class="hs" style="left:58.7px"></div><div class="c" style="left:60px;width:128px;padding-left:9px;text-align:left">部门名称</div><div class="hs" style="left:186.7px"></div><div class="c" style="left:188px;width:128px;padding-right:11px;text-align:right;padding-right:14px">销售金额(<span class="yy">¥</span>)<i class="so"></i></div><div class="hs" style="left:314.7px"></div><div class="c" style="left:316px;width:128px;padding-right:11px;text-align:right;padding-right:14px">理论毛利(<span class="yy">¥</span>)<i class="so"></i></div><div class="hs" style="left:442.7px"></div><div class="c" style="left:444px;width:128px;padding-right:11px;text-align:right;padding-right:14px">理论毛利率(%)<i class="so"></i></div><div class="hs" style="left:570.7px"></div><div class="c" style="left:572px;width:128px;padding-right:11px;text-align:right;padding-right:14px">实际毛利(<span class="yy">¥</span>)<i class="so"></i></div><div class="hs" style="left:698.7px"></div><div class="c" style="left:700px;width:128.5px;padding-right:11px;text-align:right;padding-right:14px">实际毛利率(%)<i class="so"></i></div><div class="hs" style="left:828.0px"></div><div class="c" style="left:830.0px;width:96.5px;text-align:center">排行趋势</div><div class="hs" style="left:923.7px"></div></div><div class="row" style="top:47px"><div class="c" style="left:-1px;width:60px;text-align:center">1</div><div class="c" style="left:60px;width:128px;padding-left:9px;text-align:left">厨房</div><div class="c" style="left:188px;width:128px;padding-right:11px;text-align:right">299972.24</div><div class="c" style="left:316px;width:128px;padding-right:11px;text-align:right">217450.14</div><div class="c" style="left:444px;width:128px;padding-right:11px;text-align:right">84.06</div><div class="c" style="left:572px;width:128px;padding-right:11px;text-align:right">214329.16</div><div class="c" style="left:700px;width:128.5px;padding-right:11px;text-align:right">82.85</div><div class="c" style="left:830.0px;width:96.5px;text-align:center;color:#808695">0</div></div><div class="row" style="top:92px"><div class="c" style="left:-1px;width:60px;text-align:center">2</div><div class="c" style="left:60px;width:128px;padding-left:9px;text-align:left">吧台</div><div class="c" style="left:188px;width:128px;padding-right:11px;text-align:right">121699.76</div><div class="c" style="left:316px;width:128px;padding-right:11px;text-align:right">92224.16</div><div class="c" style="left:444px;width:128px;padding-right:11px;text-align:right">98.95</div><div class="c" style="left:572px;width:128px;padding-right:11px;text-align:right">92838.01</div><div class="c" style="left:700px;width:128.5px;padding-right:11px;text-align:right">99.6</div><div class="c" style="left:830.0px;width:96.5px;text-align:center;color:#808695">0</div></div></div></div><svg style="left:0;top:0" width="2560" height="1258" viewBox="0 0 2560 1258">
<path d="M254 629.5L1503.5 629.5" stroke="#e2e5ee" stroke-width="1" fill="none"/>
<text x="246.5" y="632.3" text-anchor="end" font-size="12" fill="#6e7079" font-family="Liberation Sans,sans-serif" >¥ 500,000</text>
<path d="M254 671.5L1503.5 671.5" stroke="#e2e5ee" stroke-width="1" fill="none"/>
<text x="246.5" y="674.3" text-anchor="end" font-size="12" fill="#6e7079" font-family="Liberation Sans,sans-serif" >¥ 400,000</text>
<path d="M254 714.5L1503.5 714.5" stroke="#e2e5ee" stroke-width="1" fill="none"/>
<text x="246.5" y="717.3" text-anchor="end" font-size="12" fill="#6e7079" font-family="Liberation Sans,sans-serif" >¥ 300,000</text>
<path d="M254 757.5L1503.5 757.5" stroke="#e2e5ee" stroke-width="1" fill="none"/>
<text x="246.5" y="760.3" text-anchor="end" font-size="12" fill="#6e7079" font-family="Liberation Sans,sans-serif" >¥ 200,000</text>
<path d="M254 800.5L1503.5 800.5" stroke="#e2e5ee" stroke-width="1" fill="none"/>
<text x="246.5" y="803.3" text-anchor="end" font-size="12" fill="#6e7079" font-family="Liberation Sans,sans-serif" >¥ 100,000</text>
<text x="246.5" y="845.3" text-anchor="end" font-size="12" fill="#6e7079" font-family="Liberation Sans,sans-serif" >¥ 0</text>
<rect x="338.7" y="666.16" width="217.1" height="176.74" fill="#f7c362"/>
<rect x="577.7" y="750.14" width="217.1" height="92.76" fill="#00c192"/>
<text x="566.75" y="859.6" text-anchor="middle" font-size="12" fill="#6e7079" font-family="Liberation Sans,sans-serif" >厨房</text>
<rect x="963.2" y="785.31" width="217.1" height="57.59" fill="#f7c362"/>
<rect x="1202.2" y="803.56" width="217.1" height="39.34" fill="#00c192"/>
<text x="1191.25" y="859.6" text-anchor="middle" font-size="12" fill="#6e7079" font-family="Liberation Sans,sans-serif" >吧台</text>
<rect x="254" y="842" width="1249.5" height="2" fill="#a0a1a7"/>
<rect x="1396.8" y="600.8" width="25" height="14" rx="3.5" fill="#f7c362"/>
<text x="1427" y="611.1" text-anchor="start" font-size="12" fill="#464646" font-family="Liberation Sans,sans-serif" >上期</text>
<rect x="1458.8" y="600.8" width="25" height="14" rx="3.5" fill="#00c192"/>
<text x="1488.5" y="611.1" text-anchor="start" font-size="12" fill="#464646" font-family="Liberation Sans,sans-serif" >本期</text>
</svg>
<div class="card" style="top:913.5px"><div class="ct">原料贡献毛利排行</div><div class="bg" style="left:2094.5px;top:12.5px;width:211px;border-radius:5px"><span class="on" style="left:0px;width:70.0px">原料</span><span style="left:69.5px;width:70px">分类</span><span style="left:139.5px;width:69.5px">供应商</span></div><div class="lnk" style="left:2321px;top:26px">查看明细</div><div class="vd" style="left:1431px;top:62.5px;height:300px"></div><div class="tb" style="left:1448.5px;top:62.5px;width:929px;height:274px"><div class="hd"><div class="c" style="left:-1px;width:60px;text-align:center">序号</div><div class="hs" style="left:58.7px"></div><div class="c" style="left:60px;width:256px;padding-left:9px;text-align:left">原料名称</div><div class="hs" style="left:314.7px"></div><div class="c" style="left:316px;width:256px;padding-right:11px;text-align:right;padding-right:14px">贡献毛利(<span class="yy">¥</span>)<i class="so"></i></div><div class="hs" style="left:570.7px"></div><div class="c" style="left:572px;width:256.5px;padding-right:11px;text-align:right;padding-right:14px">贡献占比(%)<i class="so"></i></div><div class="hs" style="left:828.0px"></div><div class="c" style="left:830.0px;width:96.5px;text-align:center">排行趋势</div><div class="hs" style="left:923.7px"></div></div><div class="row" style="top:47px"><div class="c" style="left:-1px;width:60px;text-align:center">1</div><div class="c" style="left:60px;width:256px;padding-left:9px;text-align:left">30/40青虾</div><div class="c" style="left:316px;width:256px;padding-right:11px;text-align:right">25846.17</div><div class="c" style="left:572px;width:256.5px;padding-right:11px;text-align:right">7.34</div><div class="c" style="left:830.0px;width:96.5px;text-align:center;color:#808695">0</div></div><div class="row" style="top:92px"><div class="c" style="left:-1px;width:60px;text-align:center">2</div><div class="c" style="left:60px;width:256px;padding-left:9px;text-align:left">去骨牛肋条</div><div class="c" style="left:316px;width:256px;padding-right:11px;text-align:right">25457.1</div><div class="c" style="left:572px;width:256.5px;padding-right:11px;text-align:right">7.23</div><div class="c" style="left:830.0px;width:96.5px;text-align:center;color:#808695">0</div></div><div class="row" style="top:137px"><div class="c" style="left:-1px;width:60px;text-align:center">3</div><div class="c" style="left:60px;width:256px;padding-left:9px;text-align:left">扇贝肉</div><div class="c" style="left:316px;width:256px;padding-right:11px;text-align:right">18326.47</div><div class="c" style="left:572px;width:256.5px;padding-right:11px;text-align:right">5.2</div><div class="c" style="left:830.0px;width:96.5px;text-align:center;color:#808695">0</div></div><div class="row" style="top:182px"><div class="c" style="left:-1px;width:60px;text-align:center">4</div><div class="c" style="left:60px;width:256px;padding-left:9px;text-align:left">黑鱼片</div><div class="c" style="left:316px;width:256px;padding-right:11px;text-align:right">13390.03</div><div class="c" style="left:572px;width:256.5px;padding-right:11px;text-align:right">3.8</div><div class="c" style="left:830.0px;width:96.5px;text-align:center;color:#808695">0</div></div><div class="row" style="top:227px"><div class="c" style="left:-1px;width:60px;text-align:center">5</div><div class="c" style="left:60px;width:256px;padding-left:9px;text-align:left">冻牛腱子</div><div class="c" style="left:316px;width:256px;padding-right:11px;text-align:right">13311.3</div><div class="c" style="left:572px;width:256.5px;padding-right:11px;text-align:right">3.78</div><div class="c" style="left:830.0px;width:96.5px;text-align:center;color:#808695"><span style="color:#f8774a;position:relative;left:0px"><svg style="position:static;vertical-align:-1.500px;margin-right:3.500px" width="6" height="12" viewBox="0 0 6 12" fill="none" stroke="#f8824f" stroke-width="1.100"><path d="M3 0.700V11.500M0.500 3.200L3 0.700L5.500 3.200"/></svg>1</span></div></div></div></div><svg style="left:0;top:0" width="2560" height="1258" viewBox="0 0 2560 1258">
<path d="M254 1009.5L1503.5 1009.5" stroke="#e2e5ee" stroke-width="1" fill="none"/>
<text x="246.5" y="1012.3" text-anchor="end" font-size="12" fill="#6e7079" font-family="Liberation Sans,sans-serif" >¥ 60,000</text>
<path d="M254 1044.5L1503.5 1044.5" stroke="#e2e5ee" stroke-width="1" fill="none"/>
<text x="246.5" y="1047.3" text-anchor="end" font-size="12" fill="#6e7079" font-family="Liberation Sans,sans-serif" >¥ 50,000</text>
<path d="M254 1080.5L1503.5 1080.5" stroke="#e2e5ee" stroke-width="1" fill="none"/>
<text x="246.5" y="1083.3" text-anchor="end" font-size="12" fill="#6e7079" font-family="Liberation Sans,sans-serif" >¥ 40,000</text>
<path d="M254 1115.5L1503.5 1115.5" stroke="#e2e5ee" stroke-width="1" fill="none"/>
<text x="246.5" y="1118.3" text-anchor="end" font-size="12" fill="#6e7079" font-family="Liberation Sans,sans-serif" >¥ 30,000</text>
<path d="M254 1151.5L1503.5 1151.5" stroke="#e2e5ee" stroke-width="1" fill="none"/>
<text x="246.5" y="1154.3" text-anchor="end" font-size="12" fill="#6e7079" font-family="Liberation Sans,sans-serif" >¥ 20,000</text>
<path d="M254 1187.5L1503.5 1187.5" stroke="#e2e5ee" stroke-width="1" fill="none"/>
<text x="246.5" y="1190.3" text-anchor="end" font-size="12" fill="#6e7079" font-family="Liberation Sans,sans-serif" >¥ 10,000</text>
<text x="246.5" y="1225.3" text-anchor="end" font-size="12" fill="#6e7079" font-family="Liberation Sans,sans-serif" >¥ 0</text>
<rect x="288.25" y="1030.22" width="86.8" height="192.68" fill="#f7c362"/>
<rect x="383.75" y="1131.02" width="86.8" height="91.88" fill="#00c192"/>
<text x="379.4" y="1239.6" text-anchor="middle" font-size="12" fill="#6e7079" font-family="Liberation Sans,sans-serif" >30/40青虾</text>
<rect x="538.05" y="1050.48" width="86.8" height="172.42" fill="#f7c362"/>
<rect x="633.55" y="1132.4" width="86.8" height="90.5" fill="#00c192"/>
<text x="629.2" y="1239.6" text-anchor="middle" font-size="12" fill="#6e7079" font-family="Liberation Sans,sans-serif" >去骨牛肋条</text>
<rect x="787.85" y="1103.45" width="86.8" height="119.45" fill="#f7c362"/>
<rect x="883.35" y="1157.75" width="86.8" height="65.15" fill="#00c192"/>
<text x="879" y="1239.6" text-anchor="middle" font-size="12" fill="#6e7079" font-family="Liberation Sans,sans-serif" >扇贝肉</text>
<rect x="1037.65" y="1127.77" width="86.8" height="95.13" fill="#f7c362"/>
<rect x="1133.15" y="1175.3" width="86.8" height="47.6" fill="#00c192"/>
<text x="1128.8" y="1239.6" text-anchor="middle" font-size="12" fill="#6e7079" font-family="Liberation Sans,sans-serif" >黑鱼片</text>
<rect x="1287.45" y="1136.58" width="86.8" height="86.32" fill="#f7c362"/>
<rect x="1382.95" y="1175.58" width="86.8" height="47.32" fill="#00c192"/>
<text x="1378.6" y="1239.6" text-anchor="middle" font-size="12" fill="#6e7079" font-family="Liberation Sans,sans-serif" >冻牛腱子</text>
<rect x="254" y="1222" width="1249.5" height="2" fill="#a0a1a7"/>
<rect x="1396.8" y="980.8" width="25" height="14" rx="3.5" fill="#f7c362"/>
<text x="1427" y="991.1" text-anchor="start" font-size="12" fill="#464646" font-family="Liberation Sans,sans-serif" >上期</text>
<rect x="1458.8" y="980.8" width="25" height="14" rx="3.5" fill="#00c192"/>
<text x="1488.5" y="991.1" text-anchor="start" font-size="12" fill="#464646" font-family="Liberation Sans,sans-serif" >本期</text>
</svg>
<div class="abs" style="left:2555px;top:61px;width:5px;height:1197px;background:#f1f1f1"></div><div class="abs" style="left:2555px;top:61px;width:5px;height:600px;background:#d5d5d5;border-radius:0 0 3px 3px"></div>
</body></html>
